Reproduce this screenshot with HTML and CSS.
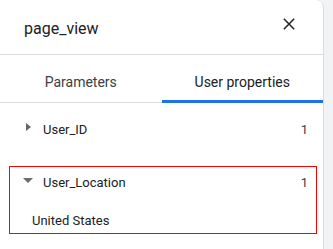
FILE: index.html
```html
<!DOCTYPE html>
<html>
<head>
<meta charset="utf-8">
<link rel="stylesheet" href="styles.css">
</head>
<body>
<div class="page">
  <div class="panel">
    <div class="header">
      <span class="title">page_view</span>
      <svg class="close" width="12" height="12" viewBox="0 0 12 12"><path d="M0.8 0.8L11.2 11.2M11.2 0.8L0.8 11.2" stroke="#202124" stroke-width="1.5"/></svg>
    </div>
    <div class="tabs">
      <div class="tab">Parameters</div>
      <div class="tab active">User properties</div>
    </div>
    <div class="list">
      <div class="row">
        <svg class="tri" width="5" height="8" viewBox="0 0 5 8"><path d="M0 0L5 4L0 8Z" fill="#6b6166"/></svg>
        <span class="name">User_ID</span>
        <span class="count">1</span>
      </div>
      <div class="item open">
        <div class="row">
          <svg class="tri down" width="10" height="5" viewBox="0 0 10 5"><path d="M0 0L10 0L5 5Z" fill="#6b6b6b"/></svg>
          <span class="name">User_Location</span>
          <span class="count">1</span>
        </div>
        <div class="value">United States</div>
      </div>
    </div>
  </div>
  <div class="side"></div>
</div>
</body>
</html>
```
FILE: styles.css
```css
html, body { margin: 0; padding: 0; }
body {
  width: 333px; height: 249px; overflow: hidden;
  font-family: Roboto, "Liberation Sans", sans-serif;
  color: #202124;
  background: #f1f3f4;
}
.page { display: flex; height: 249px; }
.panel {
  width: 324px; background: #fff;
  border-right: 1px solid #dadce0;
  border-top-right-radius: 8px;
  box-sizing: border-box;
}
.side { flex: 1; background: #f1f3f4; }
.header {
  height: 55px; display: flex; align-items: center; justify-content: space-between;
  padding: 0 28px 0 24px;
  border-bottom: 1px solid #dadce0;
  box-sizing: border-box;
}
.title { font-size: 16px; margin-top: 2px; }
.close { margin-top: -6px; }
.tabs {
  display: flex; height: 48px; border-bottom: 1px solid #dadce0; box-sizing: border-box;
}
.tab {
  flex: 1; display: flex; align-items: center; justify-content: center;
  font-size: 14px; color: #3c4043; box-sizing: border-box; padding-top: 6px;
}
.tab.active { color: #202124; border-bottom: 3px solid #1a73e8; padding-top: 9px; margin-bottom: -1px; }
.list { padding: 13px 6px 0 9px; }
.row {
  display: flex; align-items: center; height: 26px; font-size: 13px;
  padding: 0 9px 0 17px;
}
.tri { margin-right: 12px; margin-top: -4px; }
.item { border: 1px solid #ff0000; margin-top: 24px; height: 68px; box-sizing: border-box; padding-top: 2px; }
.item .row { padding-left: 13px; padding-right: 8px; }
.tri.down { margin-right: 10px; margin-top: -3px; }
.name { flex: 1; }
.count { color: #3c4043; }
.value { font-size: 13px; line-height: 16px; padding: 18px 0 0 22px; }
```
